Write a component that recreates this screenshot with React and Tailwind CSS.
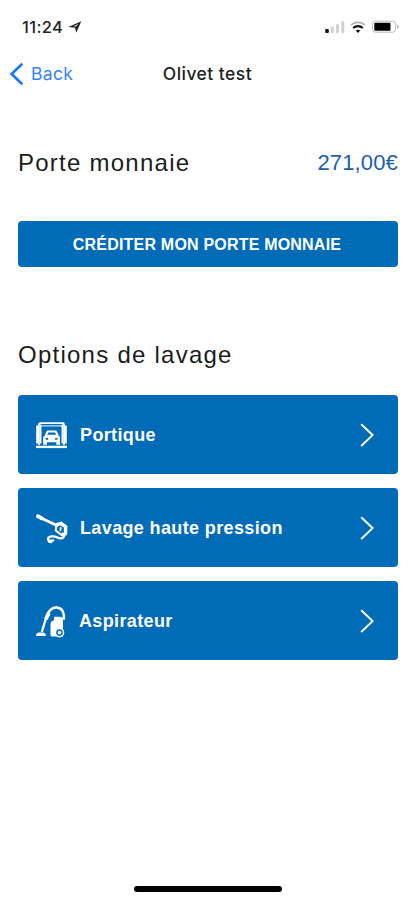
import React from "react";

function StatusBar() {
  return (
    <div className="flex h-[50px] items-center justify-between pl-[22px] pr-[15px] pt-[3px] font-['Inter',sans-serif]">
      <div className="flex items-center gap-[5px]">
        <span className="text-[16.5px] font-medium leading-5 tracking-[0.35px] text-[#222]">11:24</span>
        <svg width="14" height="12" viewBox="0 0 14 12">
          <path d="M13.3.2 8.3 11.8 7 6.7.3 6Z" fill="#222" />
          <path d="M10.8 2.7 5.5 5.2l2.3.4Z" fill="white" />
        </svg>
      </div>
      <svg width="76" height="14" viewBox="0 0 76 14">
        <rect x="1.2" y="9" width="3.6" height="4" rx="1" fill="#111" />
        <rect x="6.7" y="6.5" width="3" height="6.5" rx=".8" fill="#d0d0d0" />
        <rect x="12" y="4.2" width="3" height="8.8" rx=".8" fill="#d0d0d0" />
        <rect x="17.3" y="1.5" width="3" height="11.5" rx=".8" fill="#d0d0d0" />
        <path d="M27 5a10.5 10.5 0 0 1 14 0" fill="none" stroke="#aaa" strokeWidth="1.6" />
        <path d="M29.2 8a7.2 7.2 0 0 1 9.6 0" fill="none" stroke="#111" strokeWidth="2.2" />
        <path d="m31.7 10.5a3.8 3.8 0 0 1 4.6 0L34 13Z" fill="#111" />
        <rect x="48.5" y="1.2" width="23.2" height="11" rx="3" fill="none" stroke="#bbb" />
        <rect x="50.3" y="2.7" width="16.2" height="8" rx="1" fill="#000" />
        <path d="M73.3 4.7c2 .8 2 3.2 0 4Z" fill="#aaa" />
      </svg>
    </div>
  );
}

function NavBar() {
  return (
    <div className="grid h-[48px] grid-cols-3 items-center font-['Inter',sans-serif]">
      <div className="flex items-center gap-[7px] pl-[9px] text-[#3284f7]">
        <svg width="15" height="24" viewBox="0 0 15 24">
          <path d="M13.3 1.7 2.6 12l10.7 10.3" fill="none" stroke="#1877f7" strokeWidth="2.6" />
        </svg>
        <span className="text-[17.5px] leading-6 tracking-[0.35px]">Back</span>
      </div>
      <div className="whitespace-nowrap text-center text-[17.5px] font-medium leading-6 tracking-[0.45px] text-[#222]">Olivet test</div>
    </div>
  );
}

function GantryIcon() {
  return (
    <svg width="34" height="28" viewBox="0 0 34 28" fill="none" stroke="white">
      <path d="M5 24V3.4Q5 2.2 6.2 2.2H28.8Q30 2.2 30 3.4V24" strokeWidth="1.7" />
      <path d="M3.6 4.5V22.5M31.4 4.5V22.5" strokeWidth="2.8" />
      <path d="M6.7 3.5V22.5M28.3 3.5V22.5" strokeWidth="1.5" />
      <path d="M6 4.9H29" strokeWidth="1" />
      <path d="M2 25.9H33" strokeWidth="2.4" />
      <path d="m11.7 14.5 2-4.1h8l2 4.1" strokeWidth="2" />
      <path fillRule="evenodd" d="M9.2 16 11.5 13.8h12.3l2.2 2.2v7.8h-3.7V21.3h-9.4v2.5H9.2Zm2.5 1.1v1.6h2.4v-1.6Zm9.4 0v1.6h2.4v-1.6Z" fill="white" stroke="none" />
    </svg>
  );
}

function SprayIcon() {
  return (
    <svg width="34" height="34" viewBox="0 0 34 34" fill="none" stroke="white" strokeLinecap="round" strokeLinejoin="round">
      <path d="m3.9 5.3 4 2.1" strokeWidth="3.8" />
      <path d="m7 7 16 7.6" strokeWidth="2.8" />
      <path d="m22.5 13 4.7-1.4 5.2 3.7-.2 8-4.5 1-6-4.8Z" strokeWidth="2" />
      <path d="m23 14 3.7-1.2 4.2 2.8" strokeWidth="2.7" />
      <path d="M31.2 17v5.5l-3 .5" strokeWidth="2.6" />
      <path d="m26.7 17-.4 2.5" strokeWidth="1.8" />
      <path d="M30.3 24.2c-.9 4-4 3.7-7 2.2-3.4-1.8-9.1-1.2-9.3 1.4-.1 2.2 3.2 2.2 5.2 1.6M14.2 28.4c.4 2 1.7 2.7 3 2.6" strokeWidth="2.3" />
    </svg>
  );
}

function VacuumIcon() {
  return (
    <svg width="34" height="34" viewBox="0 0 34 34" fill="none" stroke="white">
      <path d="M12.5 12.3C15 6 18.8 3.2 23 3.6c5.3.5 7.7 5.2 6.8 12" strokeWidth="2.5" />
      <path d="m15 9-3.3 6.3" strokeWidth="3.7" />
      <path d="M12.2 13.5 7.8 28" strokeWidth="2.3" />
      <path d="M2 32c0-2.2 1.2-3.6 3.2-3.6h3.5c2 0 3.3 1.4 3.3 3.6Z" fill="white" stroke="none" />
      <path d="M16.5 20c0-2.3 1.7-3.2 3.5-3.8v-3.5h5.7c2 0 3.3 1.2 3.3 3.2v16.7H18.6c-1.5 0-2.1-.8-2.1-2.3Z" fill="white" stroke="none" />
      <circle cx="25.5" cy="28.6" r="4.8" fill="white" stroke="none" />
      <circle cx="25.5" cy="28.6" r="2.6" stroke="#006bb6" strokeWidth="1.5" />
    </svg>
  );
}

function OptionButton({ icon, label, labelClass }) {
  return (
    <button className="flex h-[79px] w-full items-center rounded-[4px] bg-[#006bb6] pl-4 pr-[23px] text-left text-white">
      <span className="flex w-[34px] shrink-0 items-center">{icon}</span>
      <span className={`flex-1 whitespace-nowrap text-[18px] font-bold leading-6 ${labelClass}`}>{label}</span>
      <svg width="15" height="24" viewBox="0 0 15 24">
        <path d="m1.2 1.2 11.4 10.9L1.2 23" fill="none" stroke="white" strokeWidth="2" />
      </svg>
    </button>
  );
}

export default function App() {
  return (
    <div className="flex h-[900px] w-[415px] flex-col bg-white font-['Liberation_Sans',Arial,sans-serif]">
      <StatusBar />
      <NavBar />
      <main className="flex flex-1 flex-col pl-[18px] pr-[17px]">
        <div className="mt-[48px] flex h-8 items-center justify-between whitespace-nowrap">
          <h1 className="pt-[2px] text-2xl tracking-[1.25px] text-[#1c1c1c]">Porte monnaie</h1>
          <span className="text-[22px] tracking-[0.15px] text-[#1b5fae]">271,00€</span>
        </div>
        <button className="mt-[43px] flex h-[46px] items-center justify-center whitespace-nowrap rounded-[4px] bg-[#006bb6] text-[16px] font-bold tracking-[0.2px] text-white pt-px pr-[2px]">
          CRÉDITER MON PORTE MONNAIE
        </button>
        <h2 className="mt-[72px] h-8 whitespace-nowrap text-2xl tracking-[1.25px] text-[#1c1c1c]">Options de lavage</h2>
        <div className="mt-[24px] flex flex-col gap-[14px]">
          <OptionButton icon={<GantryIcon />} label="Portique" labelClass="pl-3 tracking-[0.37px]" />
          <OptionButton icon={<SprayIcon />} label="Lavage haute pression" labelClass="pl-3 tracking-[0.37px]" />
          <OptionButton icon={<VacuumIcon />} label="Aspirateur" labelClass="pl-[11px] tracking-[0.37px]" />
        </div>
      </main>
      <div className="mb-[8px] ml-[134px] h-[6px] w-[148px] rounded-full bg-black" />
    </div>
  );
}
